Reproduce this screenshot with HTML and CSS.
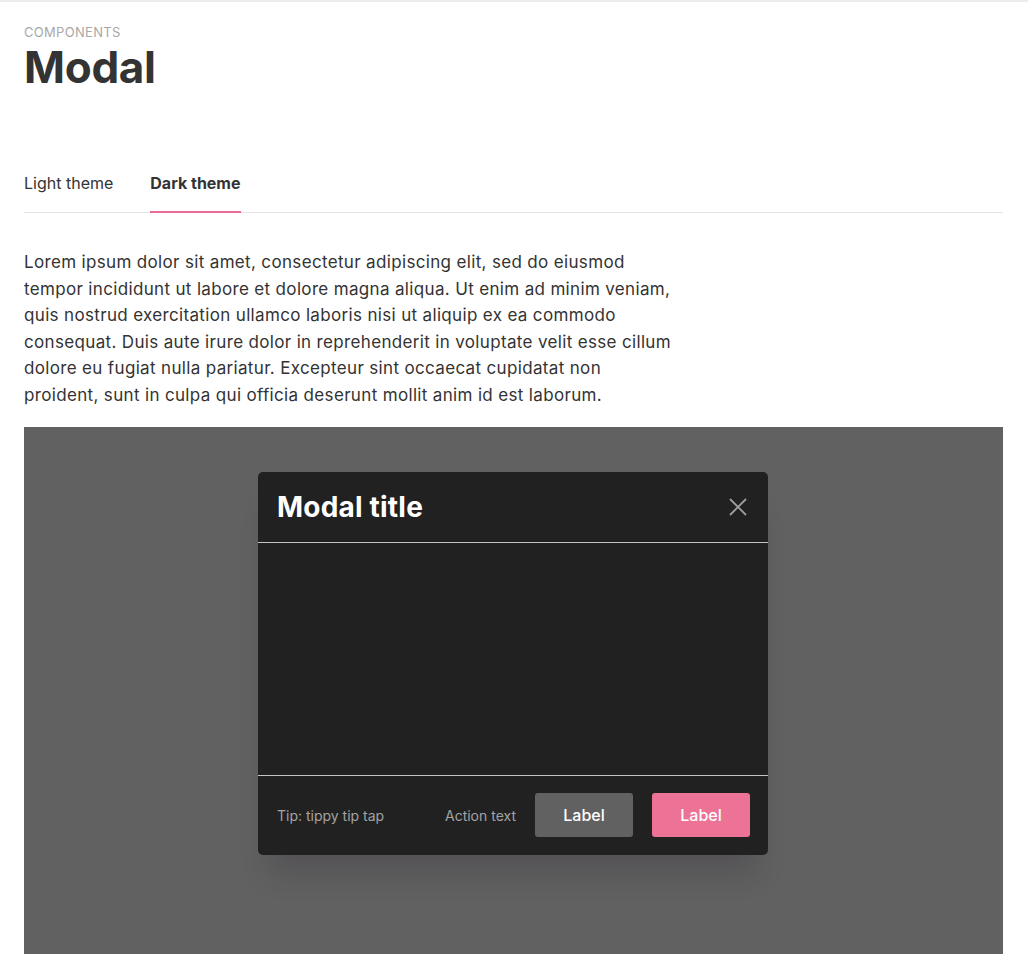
FILE: index.html
```html
<!DOCTYPE html>
<html>
    <head>
        <link rel="stylesheet" href="styles.css">
        <title>Components - Modal</title>
    </head>
    <body>
        <div class="topbar"></div>
        <div class="page">
            <p class="eyebrow">Components</p>
            <h1 class="title">Modal</h1>

            <nav class="tabs">
                <a class="tab" href="#">Light theme</a>
                <a class="tab tab-active" href="#">Dark theme</a>
            </nav>

            <p class="intro">Lorem ipsum dolor sit amet, consectetur adipiscing elit, sed do eiusmod<br>
                tempor incididunt ut labore et dolore magna aliqua. Ut enim ad minim veniam,<br>
                quis nostrud exercitation ullamco laboris nisi ut aliquip ex ea commodo<br>
                consequat. Duis aute irure dolor in reprehenderit in voluptate velit esse cillum<br>
                dolore eu fugiat nulla pariatur. Excepteur sint occaecat cupidatat non<br>
                proident, sunt in culpa qui officia deserunt mollit anim id est laborum.</p>

            <div class="stage">
                <div class="modal">
                    <div class="modal-head">
                        <h2 class="modal-title">Modal title</h2>
                        <button class="modal-close" aria-label="Close">
                            <svg width="18" height="18" viewBox="0 0 18 18">
                                <path d="M1 1 L17 17 M17 1 L1 17" stroke="#9e9e9e" stroke-width="1.8" fill="none"/>
                            </svg>
                        </button>
                    </div>
                    <div class="modal-body"></div>
                    <div class="modal-foot">
                        <span class="tip">Tip: tippy tip tap</span>
                        <span class="action">Action text</span>
                        <button class="btn btn-secondary">Label</button>
                        <button class="btn btn-primary">Label</button>
                    </div>
                </div>
            </div>
        </div>
    </body>
</html>
```

FILE: styles.css
```css
body {
    margin: 0;
    background: #fff;
    color: #333;
    font-family: Inter, "Noto Sans", sans-serif;
}
.topbar {
    height: 2px;
    background: #ececec;
}
.page {
    padding: 0 25px 0 24px;
}
.eyebrow {
    margin: 22px 0 0;
    font-size: 13px;
    line-height: 16px;
    color: #a8a8a8;
    text-transform: uppercase;
    letter-spacing: 0.3px;
}
.title {
    margin: 0;
    font-size: 44px;
    line-height: 54px;
    font-weight: 700;
    color: #333;
    letter-spacing: -0.3px;
}
.tabs {
    display: flex;
    gap: 37px;
    margin-top: 79px;
    border-bottom: 1px solid #e4e4e4;
}
.tab {
    padding-bottom: 18px;
    font-size: 16px;
    line-height: 20px;
    color: #333;
    text-decoration: none;
    border-bottom: 2px solid transparent;
    margin-bottom: -1px;
}
.tab-active {
    font-weight: 700;
    border-bottom-color: #ec6b93;
}
.intro {
    width: 700px;
    margin: 36px 0 18px;
    font-size: 17px;
    line-height: 26.6px;
    letter-spacing: 0.34px;
    color: #333;
}
.stage {
    height: 527px;
    background: #616161;
    display: flex;
    justify-content: center;
    align-items: flex-start;
    padding-top: 45px;
    box-sizing: border-box;
}
.modal {
    width: 510px;
    background: #212121;
    border-radius: 5px;
    box-shadow: 0 30px 26px -12px rgba(40, 30, 45, 0.22);
    margin-left: -1px;
}
.modal-head {
    height: 70px;
    display: flex;
    align-items: center;
    justify-content: space-between;
    padding: 0 21px 0 19px;
    border-bottom: 1px solid #c4c4c4;
}
.modal-title {
    margin: 0;
    font-size: 28px;
    font-weight: 700;
    color: #fff;
    letter-spacing: 0.2px;
}
.modal-close {
    background: none;
    border: 0;
    padding: 0;
    width: 18px;
    height: 18px;
    display: flex;
}
.modal-body {
    height: 232px;
    border-bottom: 1px solid #c4c4c4;
}
.modal-foot {
    height: 79px;
    display: flex;
    align-items: center;
    gap: 19px;
    padding: 0 18px 0 19px;
    font-size: 14px;
    color: #a3a3a3;
}
.action {
    margin-left: auto;
}
.btn {
    width: 98px;
    height: 44px;
    border: 0;
    border-radius: 3px;
    font-family: Inter, "Noto Sans", sans-serif;
    font-size: 16px;
    font-weight: 500;
    color: #fff;
}
.btn-secondary {
    background: #616161;
}
.btn-primary {
    background: #ec7396;
}
```
